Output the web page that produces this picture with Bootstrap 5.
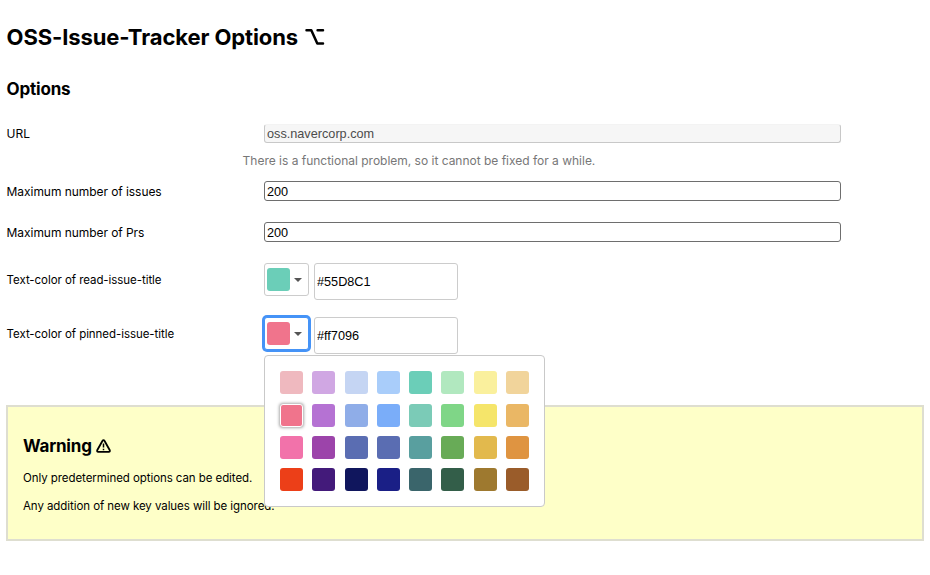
<!DOCTYPE html>
<html lang="en">
<head>
<meta charset="utf-8">
<meta name="viewport" content="width=device-width, initial-scale=1">
<title>OSS-Issue-Tracker Options</title>
<link href="https://cdn.jsdelivr.net/npm/bootstrap@5.3.0/dist/css/bootstrap.min.css" rel="stylesheet">
<style>
body{font-family:Inter,"Liberation Sans",sans-serif;font-size:12px;line-height:20px;color:#000;background:#fff}
.page{padding:22px 6px 0 6.6px}
h1{font-size:22px;line-height:30px;font-weight:700;letter-spacing:-.1px;margin-bottom:27px}
h2{font-size:17px;line-height:20px;font-weight:700;letter-spacing:-.2px}
.opt-label{width:257.4px;flex:none;letter-spacing:-.06px;padding-top:2px}
.opt-label.tight{font-size:11.5px;letter-spacing:-.06px;padding-top:7px}
.first-row{margin-top:24px}
.opt-row{height:20px}
.next-row{margin-top:21px}
.opt-row.colors{height:37px}
.last-row{margin-top:17px}
.field{width:577px;height:20px;padding:2px 2px 0;border:1px solid #6e6e6e;border-radius:3px;font:12.7px/16px "Liberation Sans",Arial,sans-serif;color:#000;background:#fff}
.field.locked{height:19px;border-color:#f3f3f3 #c8c8c8 #c8c8c8;background:#f6f6f6;color:#4c4c4c}
.field.hex{width:144px;height:37px;padding-top:0;border-color:#ccc;margin-left:5px}
.help{margin:8px 0 10px 236px;color:#777;letter-spacing:-.01px}
.picker{width:45px;height:33px;padding:0 0 0 2.4px;border:1px solid #ccc;border-radius:3px;background:#fff}
.picker.focused{box-shadow:0 0 0 2px #4593f7;border-color:#4593f7}
.chip{width:23px;height:23px;border-radius:3px;flex:none}
.arrow{width:8px;height:4px;margin-left:3.8px}
.palette{top:38px;left:0;width:281px;height:152px;border:1px solid #c9c9c9;border-radius:4px;background:#fff;padding:15.3px 14px 0 15px;display:grid;grid-template-columns:repeat(8,23px);grid-auto-rows:23px;gap:9.3px;z-index:5}
.chip.picked{border:1px solid #fff;box-shadow:0 0 3px 1px #aaa}
.warn{width:918px;height:136px;margin:51px 0 0 -.6px;border:2px solid #deded0;background:#feffc8;padding:29px 15px 0}
.warn p{margin:0;font-size:11.5px;letter-spacing:-.07px}
.warn h2{margin-bottom:12px}
.warn h2 svg{margin-left:4px}
</style>
</head>
<body>
<main class="page">
  <h1 class="d-flex align-items-center">OSS-Issue-Tracker Options
    <svg style="margin-left:7px" width="20" height="18" viewBox="0 0 20 18" fill="none" stroke="#000" stroke-width="2.5" stroke-linecap="round" stroke-linejoin="round"><path d="M1.5 2.2H6.3L12.3 15.6H18M12.6 2.2H18"/></svg>
  </h1>
  <h2 class="mb-0">Options</h2>
  <form>
    <div class="opt-row first-row d-flex align-items-center">
      <label class="opt-label" for="url">URL</label>
      <input class="field locked" id="url" value="oss.navercorp.com" disabled>
    </div>
    <div class="help">There is a functional problem, so it cannot be fixed for a while.</div>
    <div class="opt-row d-flex align-items-center">
      <label class="opt-label" for="issues">Maximum number of issues</label>
      <input class="field" id="issues" value="200">
    </div>
    <div class="opt-row next-row d-flex align-items-center">
      <label class="opt-label" for="prs">Maximum number of Prs</label>
      <input class="field" id="prs" value="200">
    </div>
    <div class="opt-row next-row colors d-flex align-items-start">
      <label class="opt-label tight">Text-color of read-issue-title</label>
      <button type="button" class="picker d-flex align-items-center" aria-label="Read issue color">
        <span class="chip" style="background:#6bceb8"></span>
        <svg class="arrow" viewBox="0 0 8 4"><path d="M0 0H8L4 4Z" fill="#555"/></svg>
      </button>
      <input class="field hex" value="#55D8C1">
    </div>
    <div class="opt-row last-row colors d-flex align-items-start">
      <label class="opt-label tight">Text-color of pinned-issue-title</label>
      <div class="position-relative">
        <button type="button" class="picker focused d-flex align-items-center" aria-label="Pinned issue color">
          <span class="chip" style="background:#f0748c"></span>
          <svg class="arrow" viewBox="0 0 8 4"><path d="M0 0H8L4 4Z" fill="#555"/></svg>
        </button>
        <div class="palette position-absolute" id="palette"></div>
      </div>
      <input class="field hex" value="#ff7096">
    </div>
  </form>
  <section class="warn">
    <h2 class="d-flex align-items-center">Warning
      <svg width="15" height="14" viewBox="0 0 15 14" fill="none" stroke="#000" stroke-width="1.8" stroke-linejoin="round"><path d="M7.5 1.2Q8.1 1.2 8.6 2L13.8 11.2Q14.2 12.8 12.8 12.8H2.2Q.8 12.8 1.2 11.2L6.4 2Q6.9 1.2 7.5 1.2Z"/><path d="M7.5 4.6V8.6M7.5 9.7V11.2" stroke-width="1.5"/></svg>
    </h2>
    <p>Only predetermined options can be edited.</p>
    <p class="mt-2">Any addition of new key values will be ignored.</p>
  </section>
</main>
<script>
const colors = ['#efb9bf','#d0a7e3','#c5d5f3','#a9cdfa','#6bceb8','#b1e8bf','#faf09d','#f1d49b',
 '#f0748c','#b572d3','#8fade8','#7aadf9','#7bcbb7','#7fd687','#f5e56a','#eab765',
 '#f272aa','#9c44aa','#5a6db2','#5a6db2','#599f9f','#68ab57','#e2b94d','#df9441',
 '#ec3f18','#431a7a','#10165d','#1a1f86','#3a656b','#335e49','#9e792f','#9a5c2a'];
document.getElementById('palette').innerHTML = colors.map((c, i) =>
  `<span class="chip${i === 8 ? ' picked' : ''}" style="background:${c}"></span>`).join('');
</script>
<script src="https://cdn.jsdelivr.net/npm/bootstrap@5.3.0/dist/js/bootstrap.bundle.min.js"></script>
</body>
</html>
